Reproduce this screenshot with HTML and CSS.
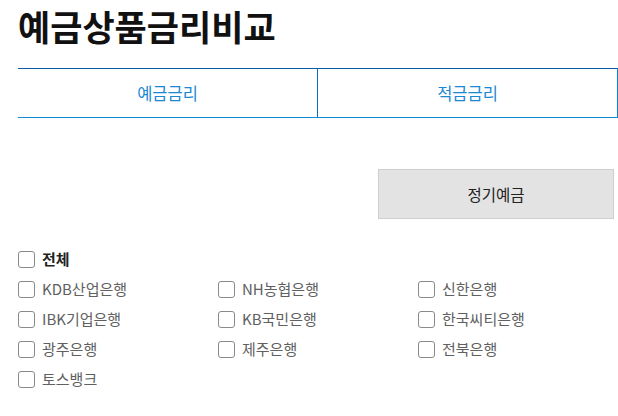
FILE: index.html
```html
<!DOCTYPE html>
<html lang="ko">
<head>
<meta charset="utf-8">
<title>예금상품금리비교</title>
<link rel="stylesheet" href="styles.css">
</head>
<body>
<div class="page">
  <h1 class="title">예금상품금리비교</h1>
  <div class="tabs">
    <div class="tab tab-first">예금금리</div>
    <div class="tab tab-last">적금금리</div>
  </div>
  <div class="type-row">
    <div class="type-btn">정기예금</div>
  </div>
  <div class="banks">
    <label class="chk chk-all"><span class="box"></span><span class="lbl">전체</span></label>
    <label class="chk"><span class="box"></span><span class="lbl">KDB산업은행</span></label>
    <label class="chk"><span class="box"></span><span class="lbl">NH농협은행</span></label>
    <label class="chk"><span class="box"></span><span class="lbl">신한은행</span></label>
    <label class="chk"><span class="box"></span><span class="lbl">IBK기업은행</span></label>
    <label class="chk"><span class="box"></span><span class="lbl">KB국민은행</span></label>
    <label class="chk"><span class="box"></span><span class="lbl">한국씨티은행</span></label>
    <label class="chk"><span class="box"></span><span class="lbl">광주은행</span></label>
    <label class="chk"><span class="box"></span><span class="lbl">제주은행</span></label>
    <label class="chk"><span class="box"></span><span class="lbl">전북은행</span></label>
    <label class="chk"><span class="box"></span><span class="lbl">토스뱅크</span></label>
  </div>
</div>
</body>
</html>
```
FILE: styles.css
```css
html, body {
  margin: 0;
  padding: 0;
  background: #fff;
}
body {
  font-family: "Noto Sans CJK KR", "Noto Sans", sans-serif;
  color: #333;
}
.page {
  padding-left: 18px;
}
.title {
  margin: 0;
  font-size: 35px;
  line-height: 51px;
  font-weight: 700;
  color: #111;
  letter-spacing: 0;
}
.tabs {
  margin-top: 17px;
  display: flex;
  height: 50px;
}
.tab {
  flex: 1;
  display: flex;
  align-items: center;
  justify-content: center;
  box-sizing: border-box;
  border-top: 1px solid #0b5aa6;
  border-bottom: 1px solid #0e89d3;
  font-size: 16.5px;
  color: #1b88d2;
}
.tab-last {
  border-left: 1px solid #0c6fbd;
  border-right: 1px solid #0d82cd;
}
.type-row {
  margin-top: 51px;
  display: flex;
  justify-content: flex-end;
  padding-right: 4px;
}
.type-btn {
  width: 236px;
  height: 50px;
  box-sizing: border-box;
  background: #e3e3e3;
  border: 1px solid #cfcfcf;
  display: flex;
  align-items: center;
  justify-content: center;
  font-size: 15.5px;
  color: #222;
}
.banks {
  margin-top: 25px;
  display: grid;
  grid-template-columns: 200px 200px 200px;
  grid-auto-rows: 30px;
}
.chk {
  display: flex;
  align-items: center;
  gap: 7px;
  font-size: 15px;
  color: #606060;
}
.chk-all {
  grid-column: 1 / -1;
  font-weight: 700;
  color: #222;
}
.box {
  width: 17px;
  height: 17px;
  box-sizing: border-box;
  border: 1px solid #8a8a8a;
  border-radius: 3px;
  background: #fff;
  flex: none;
}
.lbl {
  line-height: 20px;
}
```
